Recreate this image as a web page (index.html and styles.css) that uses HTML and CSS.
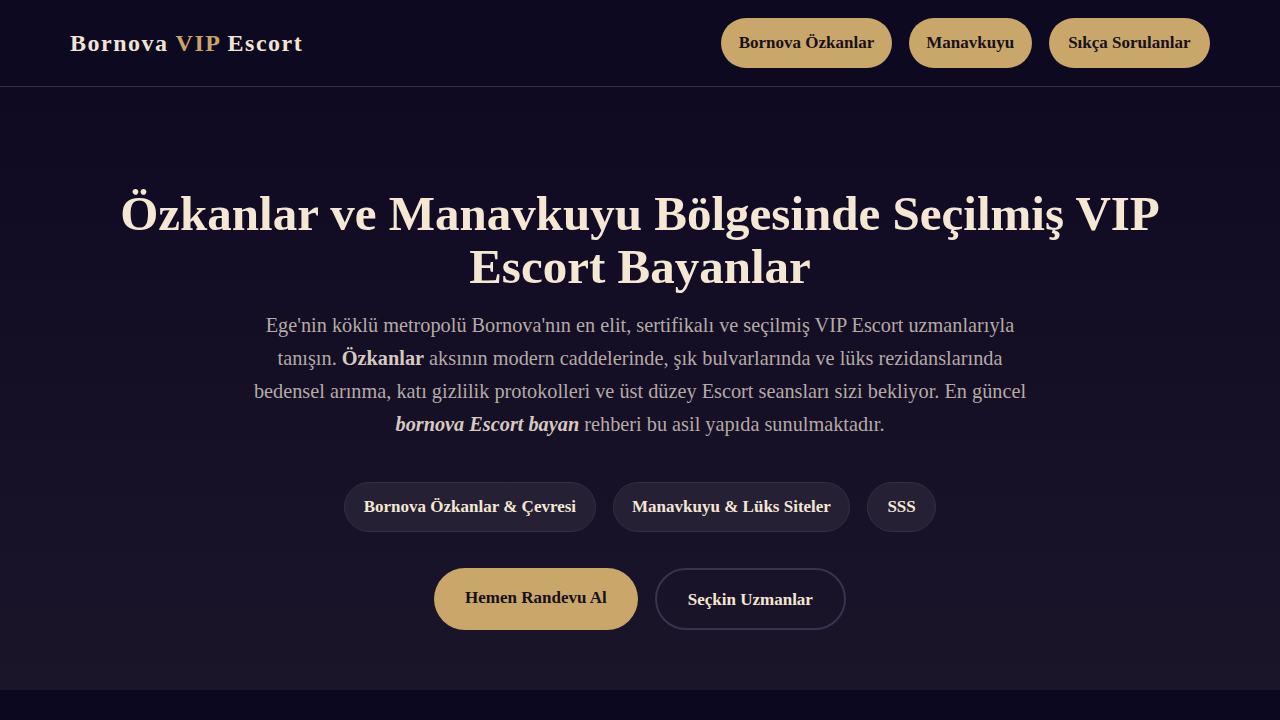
FILE: index.html
```html
<!DOCTYPE html>
<html lang="tr">
<head>
<meta charset="utf-8">
<title>Bornova VIP Escort</title>
<link rel="stylesheet" href="styles.css">
</head>
<body>
<header class="site-header">
  <div class="logo">Bornova <span class="gold">VIP</span> Escort</div>
  <nav class="nav">
    <a class="nav-btn" href="#">Bornova Özkanlar</a>
    <a class="nav-btn" href="#">Manavkuyu</a>
    <a class="nav-btn" href="#">Sıkça Sorulanlar</a>
  </nav>
</header>
<section class="hero">
  <h1 class="hero-title">Özkanlar ve Manavkuyu Bölgesinde Seçilmiş VIP Escort Bayanlar</h1>
  <p class="hero-text">Ege'nin köklü metropolü Bornova'nın en elit, sertifikalı ve seçilmiş VIP Escort uzmanlarıyla tanışın. <strong>Özkanlar</strong> aksının modern caddelerinde, şık bulvarlarında ve lüks rezidanslarında bedensel arınma, katı gizlilik protokolleri ve üst düzey Escort seansları sizi bekliyor. En güncel <strong><em>bornova Escort bayan</em></strong> rehberi bu asil yapıda sunulmaktadır.</p>
  <div class="pills">
    <a class="pill" href="#">Bornova Özkanlar &amp; Çevresi</a>
    <a class="pill" href="#">Manavkuyu &amp; Lüks Siteler</a>
    <a class="pill" href="#">SSS</a>
  </div>
  <div class="ctas">
    <a class="cta cta-gold" href="#">Hemen Randevu Al</a>
    <a class="cta cta-outline" href="#">Seçkin Uzmanlar</a>
  </div>
</section>
<div class="below"></div>
</body>
</html>
```
FILE: styles.css
```css
* { box-sizing: border-box; }
html, body { margin: 0; padding: 0; }
body {
  background: #0c0820;
  font-family: "Liberation Serif", "DejaVu Serif", serif;
  color: #f3e6d3;
  height: 720px;
  overflow: hidden;
}
a { text-decoration: none; }
.site-header {
  height: 87px;
  display: flex;
  align-items: center;
  justify-content: space-between;
  padding: 0 70px;
  background: #0d0920;
  border-bottom: 1px solid #363048;
}
.logo {
  font-size: 24px;
  font-weight: 700;
  letter-spacing: 1.5px;
  color: #f0e4d4;
}
.gold { color: #c7a56a; }
.nav { display: flex; gap: 17px; }
.nav-btn {
  height: 50px;
  display: flex;
  align-items: center;
  padding: 0 17.5px;
  border-radius: 25px;
  background: #c9a76b;
  color: #1a1018;
  font-weight: 700;
  font-size: 17px;
}
.nav-btn:nth-child(3) { padding: 0 19.5px; }
.hero {
  height: 603px;
  background: linear-gradient(180deg, #0f0a22 0%, #1a1529 100%);
  display: flex;
  flex-direction: column;
  align-items: center;
  padding-top: 100px;
}
.hero-title {
  margin: 0;
  max-width: 1100px;
  text-align: center;
  font-size: 49px;
  line-height: 53px;
  font-weight: 700;
  color: #f4e7d4;
}
.hero-text {
  margin: 16px 0 0;
  max-width: 790px;
  text-align: center;
  font-size: 20.3px;
  line-height: 33px;
  color: #b5aaa6;
}
.hero-text strong { color: #d6c9c0; }
.pills { display: flex; gap: 17px; margin-top: 41px; }
.pill {
  height: 50px;
  display: flex;
  align-items: center;
  padding: 0 18.5px;
  border-radius: 25px;
  background: #252034;
  border: 1px solid #332e44;
  color: #f3e6d3;
  font-weight: 700;
  font-size: 17px;
}
.pill:last-child { padding: 0 19px; }
.ctas { display: flex; gap: 17px; margin-top: 36px; }
.cta {
  height: 62px;
  display: flex;
  align-items: center;
  padding: 0 31px;
  border-radius: 31px;
  font-weight: 700;
  font-size: 17px;
}
.cta-gold { background: #c9a76b; color: #1a1018; padding-bottom: 2px; }
.cta-outline { border: 2px solid #3a3350; color: #f3e6d3; padding-top: 2px; }
.below { height: 30px; background: #0c0820; }
```
